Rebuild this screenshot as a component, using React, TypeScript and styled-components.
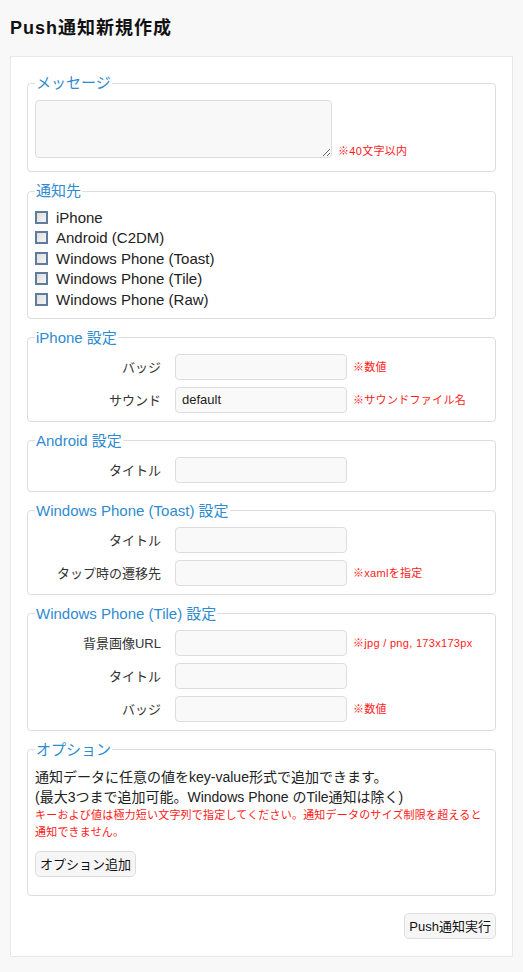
import React from 'react';
import styled, { createGlobalStyle } from 'styled-components';

const GlobalStyle = createGlobalStyle`
  body {
    margin: 0;
    padding: 0 10px;
    background-color: #f8f8f8;
    font-family: "Liberation Sans", "Noto Sans CJK JP", sans-serif;
    color: #222;
  }
`;

const Title = styled.h1`
  margin: 0;
  padding-top: 16px;
  height: 24px;
  line-height: 24px;
  font-size: 18px;
  font-weight: bold;
  letter-spacing: 1px;
  color: #111;
  margin-bottom: 16px;
`;

const Panel = styled.div`
  background-color: #fff;
  border: 1px solid #e8e8e8;
  padding: 17px 16px 17px;
`;

const Fieldset = styled.fieldset<{ $top?: number; $bottom?: number }>`
  min-width: 0;
  margin: 0 0 10px;
  border: 1px solid #dddddd;
  border-radius: 4px;
  padding: ${(p) => p.$top ?? 7}px 7px ${(p) => p.$bottom ?? 8}px;
`;

const Legend = styled.legend`
  padding: 0 1px;
  font-size: 15px;
  line-height: 18px;
  color: #2f8bd0;
`;

const MessageRow = styled.div`
  display: flex;
  align-items: flex-end;
  gap: 6px;
`;

const TextArea = styled.textarea`
  box-sizing: border-box;
  width: 297px;
  height: 58px;
  margin: 0;
  background-color: #f8f8f8;
  border: 1px solid #dddddd;
  border-radius: 4px;
  font-family: inherit;
`;

const Note = styled.span`
  font-size: 11px;
  line-height: 14px;
  color: #ff1a1a;
  letter-spacing: 0.3px;
  white-space: nowrap;
`;

const CheckList = styled.div`
  display: flex;
  flex-direction: column;
`;

const CheckRow = styled.label`
  display: flex;
  align-items: center;
  height: 20.5px;
  font-size: 15px;
  color: #222;
`;

const CheckBox = styled.input`
  appearance: none;
  box-sizing: border-box;
  width: 13px;
  height: 13px;
  margin: 0 8px 0 0;
  border: 2px solid #5f7c9c;
  background: linear-gradient(135deg, #dedede, #f4f4f4);
`;

const FieldRows = styled.div`
  display: flex;
  flex-direction: column;
  gap: 7px;
`;

const FieldRow = styled.div`
  display: flex;
  align-items: center;
`;

const FieldLabel = styled.span`
  width: 126px;
  margin-right: 14px;
  text-align: right;
  font-size: 13px;
  color: #333;
`;

const TextInput = styled.input`
  box-sizing: border-box;
  width: 172px;
  height: 26px;
  margin: 0 6px 0 0;
  padding: 0 6px;
  background-color: #f9f9f9;
  border: 1px solid #dddddd;
  border-radius: 4px;
  font-family: inherit;
  font-size: 13px;
  color: #222;
`;

const InfoText = styled.p`
  margin: 0;
  font-size: 14px;
  line-height: 20px;
  color: #222;
  white-space: nowrap;
`;

const WarnText = styled.p`
  margin: 0;
  font-size: 11px;
  line-height: 17px;
  letter-spacing: 0.2px;
  color: #ff1a1a;
  white-space: nowrap;
`;

const Button = styled.button`
  box-sizing: border-box;
  height: 26px;
  padding: 0 4px;
  background-color: #f6f6f6;
  border: 1px solid #dddddd;
  border-radius: 5px;
  font-family: inherit;
  font-size: 13px;
  color: #111;
`;

const AddButton = styled(Button)`
  margin: 10px 0 10px;
`;

const Footer = styled.div`
  display: flex;
  justify-content: flex-end;
  margin-top: 17px;
`;

type Field = { label: string; value?: string; note?: string };

const SettingBox = ({ title, fields }: { title: string; fields: Field[] }) => (
  <Fieldset>
    <Legend>{title}</Legend>
    <FieldRows>
      {fields.map((f) => (
        <FieldRow key={f.label}>
          <FieldLabel>{f.label}</FieldLabel>
          <TextInput defaultValue={f.value ?? ''} />
          {f.note && <Note>{f.note}</Note>}
        </FieldRow>
      ))}
    </FieldRows>
  </Fieldset>
);

const targets = [
  'iPhone',
  'Android (C2DM)',
  'Windows Phone (Toast)',
  'Windows Phone (Tile)',
  'Windows Phone (Raw)',
];

const App = () => {
  return (
    <>
      <GlobalStyle />
      <Title>Push通知新規作成</Title>
      <Panel>
        <Fieldset $top={8} $bottom={13}>
          <Legend>メッセージ</Legend>
          <MessageRow>
            <TextArea />
            <Note>※40文字以内</Note>
          </MessageRow>
        </Fieldset>

        <Fieldset $top={7} $bottom={8}>
          <Legend>通知先</Legend>
          <CheckList>
            {targets.map((t) => (
              <CheckRow key={t}>
                <CheckBox type="checkbox" />
                {t}
              </CheckRow>
            ))}
          </CheckList>
        </Fieldset>

        <SettingBox
          title="iPhone 設定"
          fields={[
            { label: 'バッジ', note: '※数値' },
            { label: 'サウンド', value: 'default', note: '※サウンドファイル名' },
          ]}
        />
        <SettingBox title="Android 設定" fields={[{ label: 'タイトル' }]} />
        <SettingBox
          title="Windows Phone (Toast) 設定"
          fields={[
            { label: 'タイトル' },
            { label: 'タップ時の遷移先', note: '※xamlを指定' },
          ]}
        />
        <SettingBox
          title="Windows Phone (Tile) 設定"
          fields={[
            { label: '背景画像URL', note: '※jpg / png, 173x173px' },
            { label: 'タイトル' },
            { label: 'バッジ', note: '※数値' },
          ]}
        />

        <Fieldset $top={8} $bottom={8}>
          <Legend>オプション</Legend>
          <InfoText>
            通知データに任意の値をkey-value形式で追加できます。
            <br />
            (最大3つまで追加可能。Windows Phone のTile通知は除く)
          </InfoText>
          <WarnText>
            キーおよび値は極力短い文字列で指定してください。通知データのサイズ制限を超えると
            <br />
            通知できません。
          </WarnText>
          <AddButton>オプション追加</AddButton>
        </Fieldset>

        <Footer>
          <Button>Push通知実行</Button>
        </Footer>
      </Panel>
    </>
  );
};

export default App;
